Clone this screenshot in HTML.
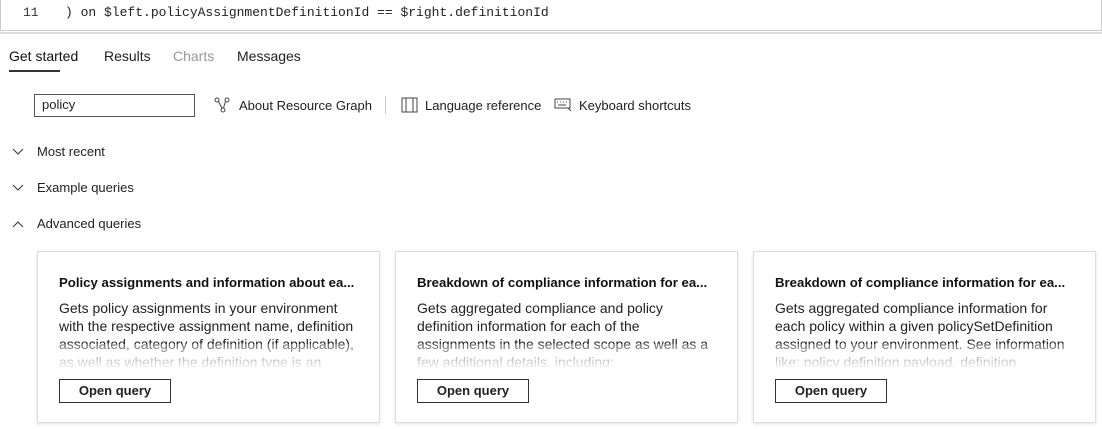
<!DOCTYPE html><html><head><style>
body{margin:0;width:1102px;height:429px;background:#fff;font-family:"Liberation Sans",sans-serif;color:#222;position:relative;overflow:hidden}
.a{position:absolute;white-space:nowrap}
.editor{position:absolute;left:0;top:0;width:1100px;height:30px;border:1px solid #ccc;border-top:none}
.mono{font-family:"Liberation Mono",monospace;font-size:13px}
.card{position:absolute;top:251px;width:341px;height:170px;border:1px solid #ddd;box-shadow:0 1px 3px rgba(0,0,0,.12);background:#fff}
.card h4{margin:0;position:absolute;left:21px;top:23px;font-size:13.2px;font-weight:bold;color:#111}
.card p{margin:0;position:absolute;left:21px;top:47px;width:300px;font-size:14px;line-height:18px;height:68px;overflow:hidden;color:#222}
.fade{position:absolute;left:0;right:0;top:92px;height:26px;background:linear-gradient(rgba(255,255,255,.3),#fff)}
.btn{position:absolute;left:21px;top:127px;width:110px;height:22px;border:1px solid #333;font-size:13px;font-weight:bold;text-align:center;line-height:22px}
</style></head><body>
<div class="editor"></div>
<div class="a mono" style="left:23px;top:5px;color:#333">11</div>
<div class="a mono" style="left:65px;top:5px;color:#222">) on $left.policyAssignmentDefinitionId == $right.definitionId</div>
<div class="a" style="left:0;top:32px;width:1102px;height:2px;background:#ddd"></div>
<div class="a" style="left:9px;top:48px;font-size:14px;color:#111">Get started</div>
<div class="a" style="left:9px;top:70px;width:51px;height:2px;background:#333"></div>
<div class="a" style="left:104px;top:48px;font-size:14px">Results</div>
<div class="a" style="left:173px;top:48px;font-size:14px;color:#999">Charts</div>
<div class="a" style="left:237px;top:48px;font-size:14px">Messages</div>
<div class="a" style="left:34px;top:94px;width:159px;height:21px;border:1px solid #555"></div>
<div class="a" style="left:42px;top:97px;font-size:13px">policy</div>
<svg class="a" style="left:214px;top:97px" width="16" height="16" viewBox="0 0 16 16" fill="none" stroke="#444"><circle cx="3" cy="3" r="2"/><circle cx="13" cy="3" r="2"/><circle cx="9" cy="13" r="2"/><path d="M4.5 4.5L8 11.5M11.5 4.5L9.5 11"/></svg>
<div class="a" style="left:239px;top:98px;font-size:13px">About Resource Graph</div>
<div class="a" style="left:385px;top:96px;width:1px;height:18px;background:#ccc"></div>
<svg class="a" style="left:401px;top:97px" width="17" height="16" viewBox="0 0 17 16" fill="none" stroke="#444"><rect x="1" y="1" width="15" height="14"/><path d="M5 1v14M12 1v14"/></svg>
<div class="a" style="left:425px;top:98px;font-size:13px">Language reference</div>
<svg class="a" style="left:554px;top:98px" width="18" height="14" viewBox="0 0 18 14" fill="none" stroke="#444"><rect x="1" y="1" width="15" height="9"/><path d="M3 4h1M6 4h1M9 4h1M12 4h1M4 7h8M14 10l3 3"/></svg>
<div class="a" style="left:579px;top:98px;font-size:13px">Keyboard shortcuts</div>
<svg class="a" style="left:12px;top:148px" width="12" height="8"><path d="M1 1l5 5 5-5" fill="none" stroke="#333"/></svg>
<div class="a" style="left:37px;top:144px;font-size:13px">Most recent</div>
<svg class="a" style="left:12px;top:184px" width="12" height="8"><path d="M1 1l5 5 5-5" fill="none" stroke="#333"/></svg>
<div class="a" style="left:37px;top:180px;font-size:13px">Example queries</div>
<svg class="a" style="left:12px;top:220px" width="12" height="8"><path d="M1 7l5-5 5 5" fill="none" stroke="#333"/></svg>
<div class="a" style="left:37px;top:216px;font-size:13px">Advanced queries</div>
<div class="card" style="left:37px"><h4>Policy assignments and information about ea...</h4><p>Gets policy assignments in your environment<br>with the respective assignment name, definition<br>associated, category of definition (if applicable),<br>as well as whether the definition type is an</p><div class="fade"></div><div class="btn">Open query</div></div>
<div class="card" style="left:395px"><h4>Breakdown of compliance information for ea...</h4><p>Gets aggregated compliance and policy<br>definition information for each of the<br>assignments in the selected scope as well as a<br>few additional details, including:</p><div class="fade"></div><div class="btn">Open query</div></div>
<div class="card" style="left:753px"><h4>Breakdown of compliance information for ea...</h4><p>Gets aggregated compliance information for<br>each policy within a given policySetDefinition<br>assigned to your environment. See information<br>like: policy definition payload, definition</p><div class="fade"></div><div class="btn">Open query</div></div>
</body></html>
